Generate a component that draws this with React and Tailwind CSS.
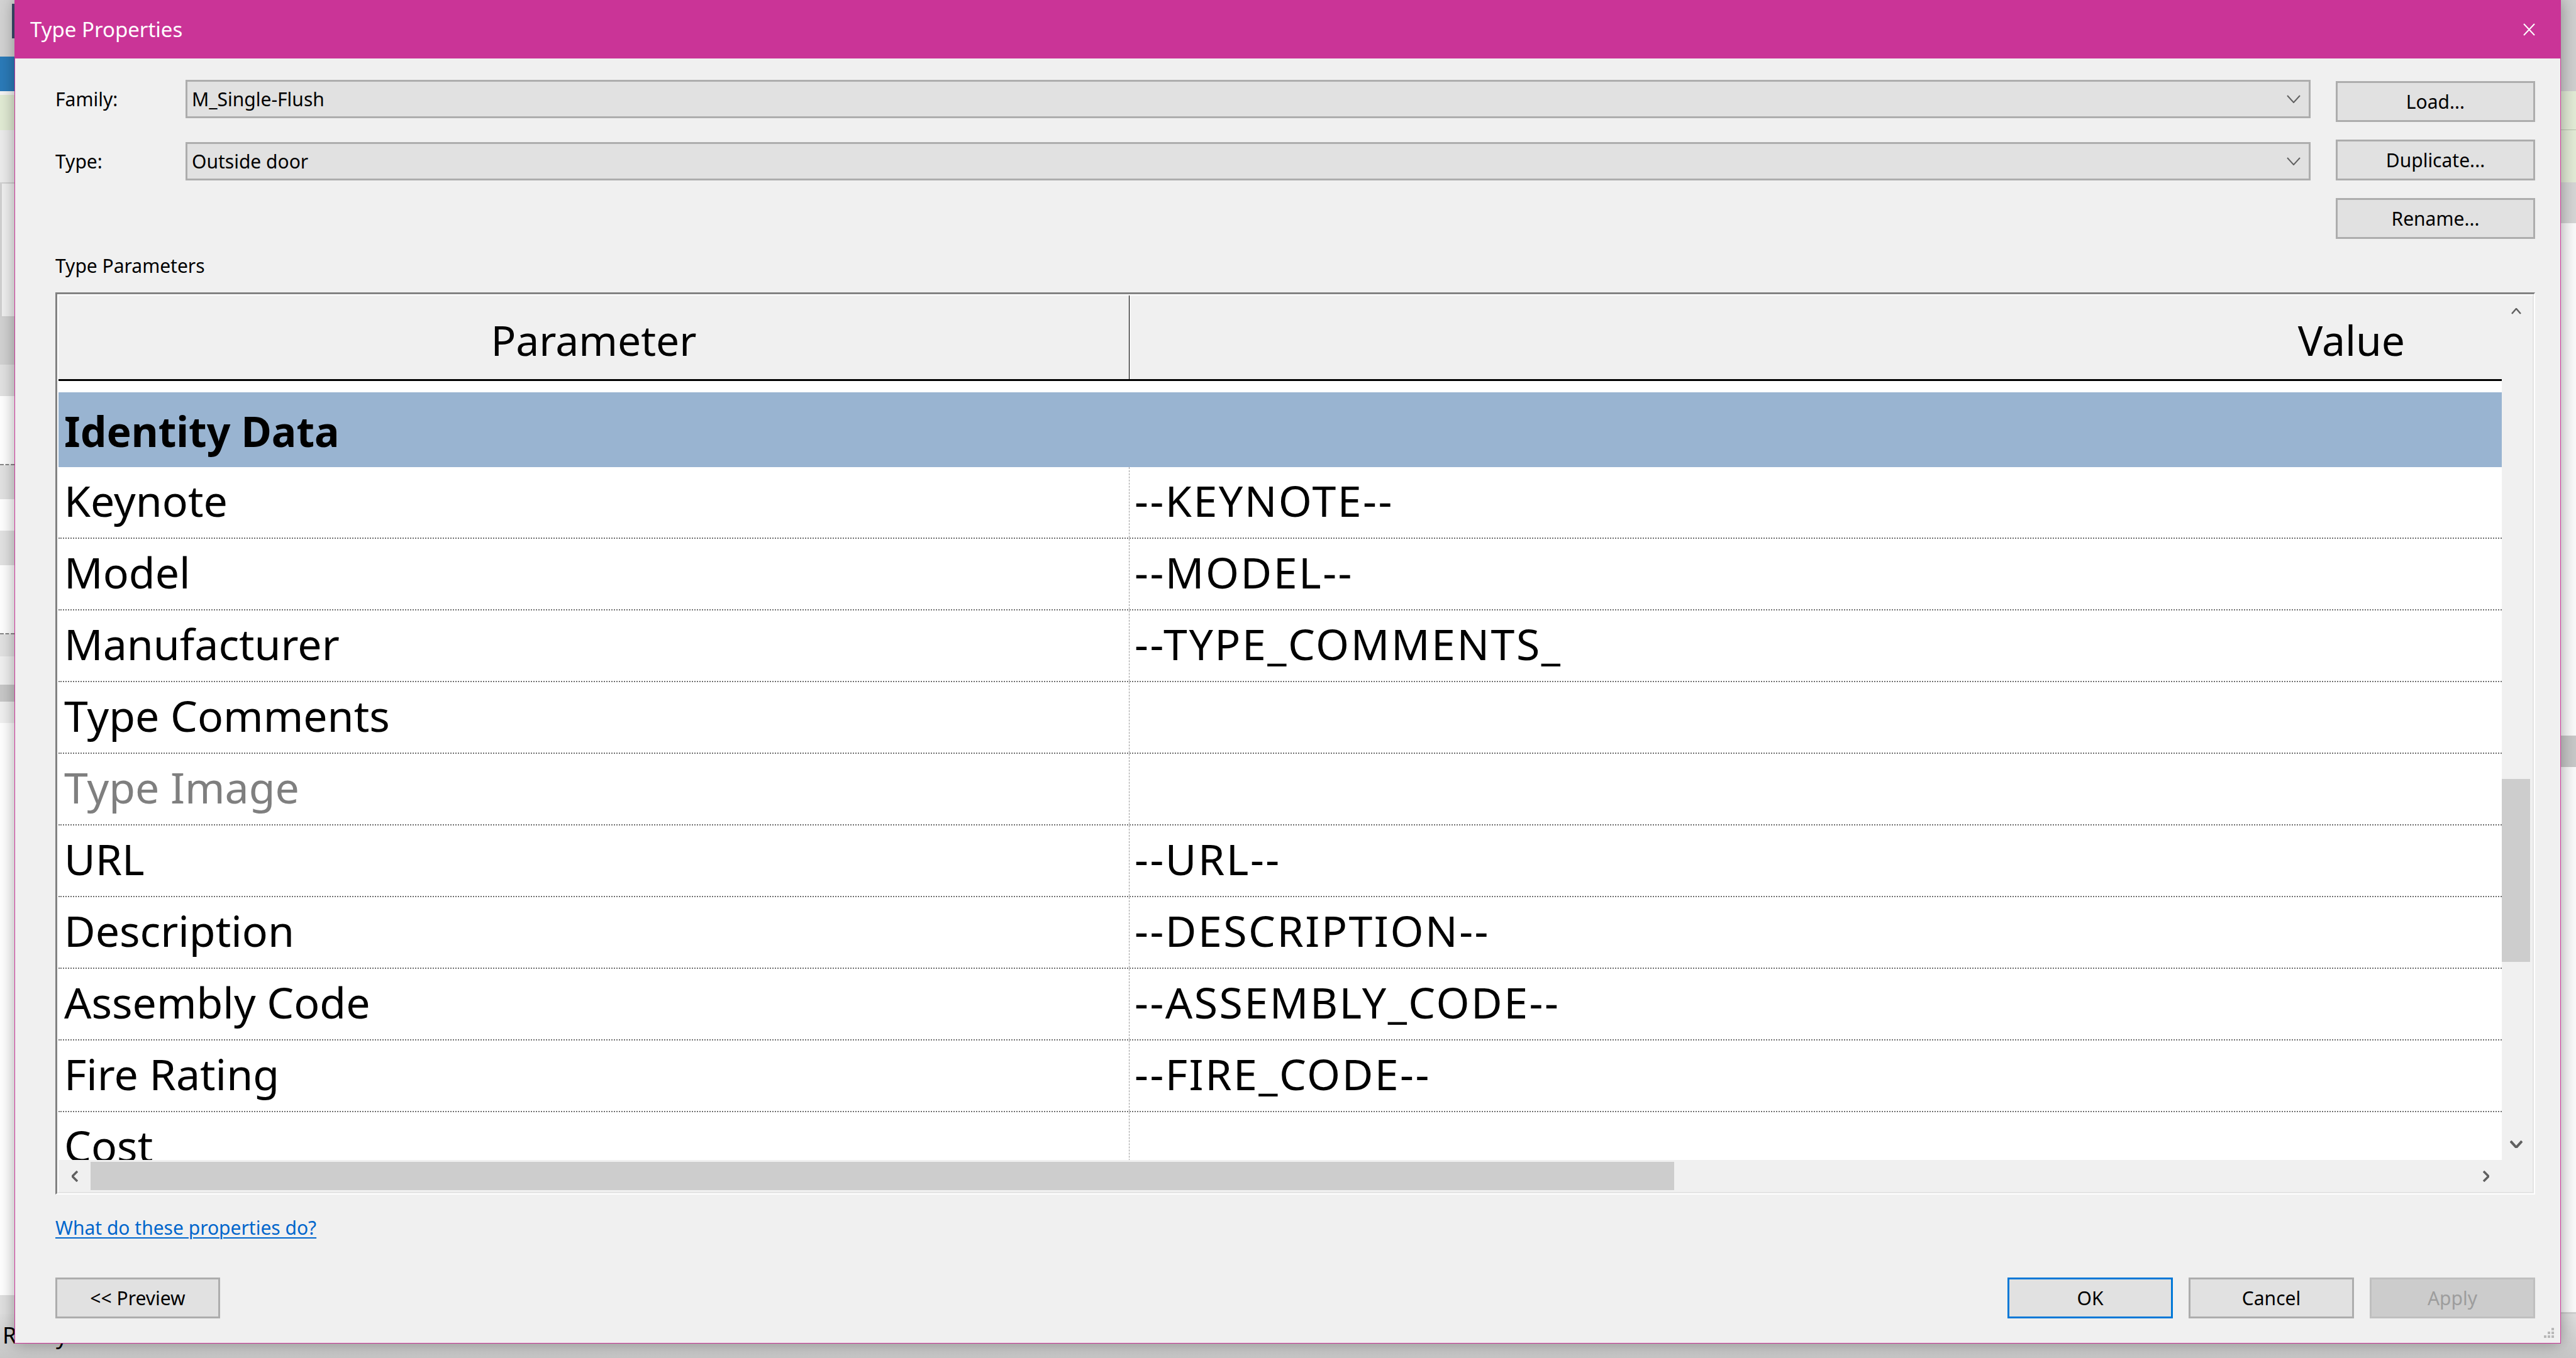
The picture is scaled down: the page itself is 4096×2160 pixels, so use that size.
import React from "react";

const rows = [
  { name: "Keynote", value: "--KEYNOTE--" },
  { name: "Model", value: "--MODEL--" },
  { name: "Manufacturer", value: "--TYPE_COMMENTS_" },
  { name: "Type Comments", value: "" },
  { name: "Type Image", value: "", muted: true },
  { name: "URL", value: "--URL--" },
  { name: "Description", value: "--DESCRIPTION--" },
  { name: "Assembly Code", value: "--ASSEMBLY_CODE--" },
  { name: "Fire Rating", value: "--FIRE_CODE--" },
  { name: "Cost", value: "" },
];

function Chevron({ dir, w, h, stroke = 3, color = "#606060" }) {
  const pts = {
    down: `1,1 ${w / 2},${h - 1} ${w - 1},1`,
    up: `1,${h - 1} ${w / 2},1 ${w - 1},${h - 1}`,
    left: `${w - 1},1 1,${h / 2} ${w - 1},${h - 1}`,
    right: `1,1 ${w - 1},${h / 2} 1,${h - 1}`,
  }[dir];
  return (
    <svg width={w} height={h} viewBox={`0 0 ${w} ${h}`}>
      <polyline points={pts} fill="none" stroke={color} strokeWidth={stroke} />
    </svg>
  );
}

function Combo({ text }) {
  return (
    <div className="flex-1 h-[61px] border-[3px] border-[#adadad] bg-[#e1e1e1] flex items-center justify-between pl-[7px] pr-[13px]">
      <span className="text-[30px] leading-none text-black">{text}</span>
      <Chevron dir="down" w={22} h={13} stroke={2} />
    </div>
  );
}

function Btn({ children, className = "" }) {
  return (
    <div
      className={
        "h-[65px] border-[3px] flex items-center justify-center text-[30px] leading-none " +
        className
      }
    >
      {children}
    </div>
  );
}

function Grip() {
  const dots = [
    [18, 0],
    [18, 6],
    [12, 6],
    [18, 12],
    [12, 12],
    [6, 12],
  ];
  return (
    <svg width="24" height="16" viewBox="0 0 24 16">
      {dots.map(([x, y], i) => (
        <rect key={i} x={x} y={y} width="4" height="4" fill="#b8b8b8" />
      ))}
    </svg>
  );
}

function Background() {
  return (
    <div className="flex flex-col w-full h-full">
      <div className="flex flex-1">
        <div className="w-[23px] flex flex-col">
          <div className="h-[90px] bg-[#d3d3d3] flex justify-end pt-[6px]">
            <div className="w-[4px] h-[55px] bg-[#3a4d6b]" />
          </div>
          <div className="h-[55px] bg-[#2b7bb9]" />
          <div className="h-[6px] bg-[#f4f4f4]" />
          <div className="h-[56px] bg-[#e1ebd4]" />
          <div className="h-[83px] bg-[#ececec]" />
          <div className="h-[215px] bg-[#f0f0f0] border-l-[3px] border-y-2 border-[#d0d0d0]" />
          <div className="h-[75px] bg-[#d2d2d2]" />
          <div className="h-[50px] bg-[#e2e2e2]" />
          <div className="h-[110px] bg-white border-b-2 border-dashed border-[#888]" />
          <div className="h-[54px] bg-[#e2e2e2]" />
          <div className="h-[50px] bg-white" />
          <div className="h-[55px] bg-[#e2e2e2]" />
          <div className="h-[110px] bg-white border-b-2 border-dashed border-[#888]" />
          <div className="h-[35px] bg-[#e2e2e2]" />
          <div className="h-[45px] bg-[#f0f0f0]" />
          <div className="h-[27px] bg-[#c8c8c8]" />
          <div className="h-[34px] bg-[#f0f0f0]" />
          <div className="flex-1 bg-white" />
          <div className="h-[30px] bg-[#e0e0e0]" />
        </div>
        <div className="flex-1 bg-[#f0f0f0]" />
        <div className="w-[24px] flex flex-col">
          <div className="h-[145px] bg-[#cfcfcf]" />
          <div className="h-[62px] bg-[#e2ebd6] border-b border-[#b8c2ae]" />
          <div className="h-[83px] bg-[#e2ebd6]" />
          <div className="h-[65px] bg-[#d5d5d5]" />
          <div className="h-[815px] bg-[#fafafa]" />
          <div className="h-[50px] bg-[#c8c8c8]" />
          <div className="flex-1 bg-[#fafafa]" />
          <div className="h-[3px] bg-[#d0d0d0]" />
        </div>
      </div>
      <div className="h-[70px] bg-gradient-to-b from-[#dedede] to-[#c6c6c6] pl-[4px] pt-[16px]">
        <span className="text-[36px] leading-none text-black">Ready</span>
      </div>
    </div>
  );
}

export default function App() {
  return (
    <div className="relative w-[4096px] h-[2160px] overflow-hidden bg-[#d3d3d3] font-['Noto_Sans',sans-serif] text-black">
      <Background />

      <div className="absolute left-[23px] top-0 w-[4049px] h-[2137px] bg-[#f0f0f0] border border-t-0 border-[#ca3497] flex flex-col shadow-[0_0_24px_rgba(0,0,0,0.35)]">
        {/* title bar */}
        <div className="h-[93px] shrink-0 bg-[#ca3497] flex items-center justify-between pl-[24px] pr-[40px]">
          <span className="text-[33px] leading-none text-white">Type Properties</span>
          <svg width="19" height="20" viewBox="0 0 19 20">
            <path d="M1 1 L18 19 M18 1 L1 19" stroke="#ffffff" strokeWidth="2" fill="none" />
          </svg>
        </div>

        <div className="relative flex-1 flex flex-col pl-[64px] pr-[40px]">
          {/* family / type */}
          <div className="mt-[34px] flex gap-[40px]">
            <div className="flex-1 flex flex-col gap-[38px]">
              <div className="flex items-center">
                <div className="w-[207px] text-[30px] leading-none">Family:</div>
                <Combo text="M_Single-Flush" />
              </div>
              <div className="flex items-center">
                <div className="w-[207px] text-[30px] leading-none">Type:</div>
                <Combo text="Outside door" />
              </div>
            </div>
            <div className="w-[317px] flex flex-col gap-[28px] pt-[2px]">
              <Btn className="border-[#adadad] bg-[#e1e1e1]">Load...</Btn>
              <Btn className="border-[#adadad] bg-[#e1e1e1]">Duplicate...</Btn>
              <Btn className="border-[#adadad] bg-[#e1e1e1]">Rename...</Btn>
            </div>
          </div>

          <div className="mt-[28px] text-[30px] leading-[30px]">Type Parameters</div>

          {/* parameter table */}
          <div className="mt-[27px] h-[1435px] flex border-t-[3px] border-l-[3px] border-r-2 border-b-2 border-t-[#828282] border-l-[#828282] border-r-white border-b-white">
            <div className="flex-1 flex flex-col border-2 border-t-white border-l-white border-r-[#e3e3e3] border-b-[#e3e3e3]">
              <div className="flex h-[1375px]">
                <div className="w-[3885px] bg-white overflow-hidden flex flex-col">
                  <div className="h-[136px] shrink-0 flex bg-[#f0f0f0] border-b-[3px] border-black">
                    <div className="w-[1703px] border-r border-black flex items-center justify-center pt-[6px]">
                      <span className="text-[66px] leading-none">Parameter</span>
                    </div>
                    <div className="flex-1 flex items-center justify-end pr-[154px] pt-[6px]">
                      <span className="text-[66px] leading-none">Value</span>
                    </div>
                  </div>
                  <div className="h-[18px] shrink-0" />
                  <div className="h-[119px] shrink-0 bg-[#99b4d1] flex items-center pl-[9px] pt-[2px]">
                    <span className="text-[66px] leading-none font-bold">Identity Data</span>
                  </div>
                  {rows.map((r) => (
                    <div
                      key={r.name}
                      className="h-[114px] shrink-0 flex border-b-2 border-dotted border-[#6f6f6f]"
                    >
                      <div className="w-[1703px] border-r border-dashed border-[#9a9a9a] flex items-center pl-[9px] pb-[6px]">
                        <span
                          className={
                            "text-[68px] leading-none " +
                            (r.muted ? "text-[#7f7f7f]" : "text-black")
                          }
                        >
                          {r.name}
                        </span>
                      </div>
                      <div className="flex-1 flex items-center pl-[8px] pb-[6px]">
                        <span className="text-[68px] leading-none tracking-[2.5px]">{r.value}</span>
                      </div>
                    </div>
                  ))}
                </div>
                <div className="flex-1 bg-[#f0f0f0] flex flex-col pr-[4px]">
                  <div className="h-[50px] flex items-center justify-center">
                    <Chevron dir="up" w={16} h={10} stroke={2.5} />
                  </div>
                  <div className="flex-1">
                    <div className="mt-[719px] h-[291px] bg-[#cdcdcd]" />
                  </div>
                  <div className="h-[50px] flex items-center justify-center">
                    <Chevron dir="down" w={20} h={12} stroke={4} />
                  </div>
                </div>
              </div>
              <div className="flex-1 flex bg-[#f0f0f0]">
                <div className="w-[3885px] flex">
                  <div className="w-[51px] flex items-center justify-center">
                    <Chevron dir="left" w={10} h={18} stroke={3.5} />
                  </div>
                  <div className="w-[2518px] my-[3px] bg-[#cdcdcd]" />
                  <div className="flex-1" />
                  <div className="w-[51px] flex items-center justify-center">
                    <Chevron dir="right" w={10} h={18} stroke={3.5} />
                  </div>
                </div>
                <div className="flex-1" />
              </div>
            </div>
          </div>

          <div className="mt-[38px] h-[30px] text-[30px] leading-[30px]">
            <span className="text-[#0066cc] underline underline-offset-[4px] decoration-2">
              What do these properties do?
            </span>
          </div>

          <div className="mt-[64px] flex items-center">
            <Btn className="w-[262px] border-[#adadad] bg-[#e1e1e1]">&lt;&lt; Preview</Btn>
            <div className="flex-1" />
            <div className="flex gap-[25px]">
              <Btn className="w-[263px] border-[#0078d7] bg-[#e1e1e1]">OK</Btn>
              <Btn className="w-[263px] border-[#adadad] bg-[#e1e1e1]">Cancel</Btn>
              <Btn className="w-[263px] border-[#bfbfbf] bg-[#cccccc] text-[#9d9d9d]">Apply</Btn>
            </div>
          </div>

          <div className="absolute right-[8px] bottom-[8px]">
            <Grip />
          </div>
        </div>
      </div>
    </div>
  );
}
